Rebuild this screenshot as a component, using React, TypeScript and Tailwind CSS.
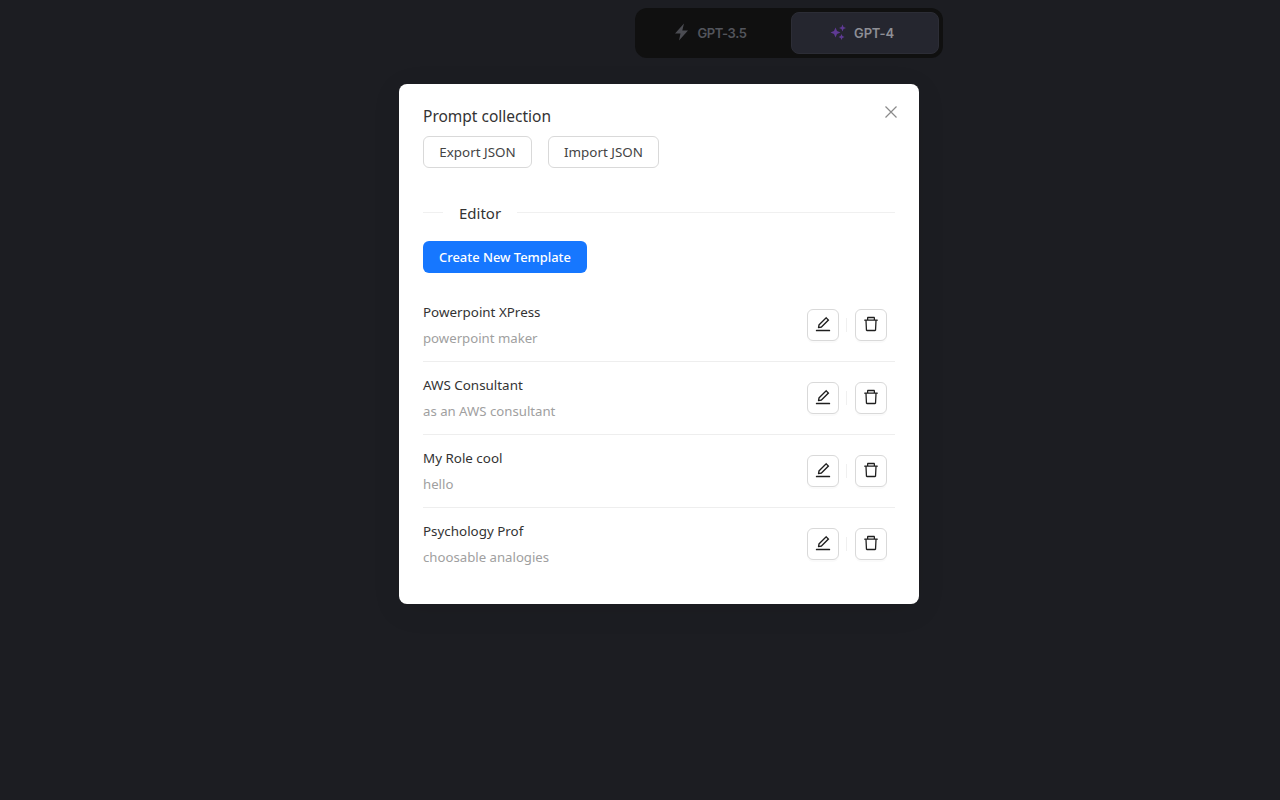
import React from "react";

const items = [
  ["Powerpoint XPress", "powerpoint maker"],
  ["AWS Consultant", "as an AWS consultant"],
  ["My Role cool", "hello"],
  ["Psychology Prof", "choosable analogies"],
];

function EditIcon() {
  return (
    <svg width="16" height="16" viewBox="64 64 896 896" fill="currentColor" className="-translate-y-px">
      <path d="M257.7 752c2 0 4-.2 6-.5L431.9 722c2-.4 3.9-1.3 5.3-2.8l423.9-423.9a9.96 9.96 0 0 0 0-14.1L694.9 114.9c-1.9-1.9-4.4-2.9-7.1-2.9s-5.2 1-7.1 2.9L256.8 538.8c-1.5 1.5-2.4 3.3-2.8 5.3l-29.5 168.2a33.5 33.5 0 0 0 9.4 29.8c6.6 6.4 14.9 9.9 23.8 9.9zm67.4-174.4L687.8 215l73.3 73.3-362.7 362.6-88.9 15.7 15.6-89zM880 836H144c-17.7 0-32 14.3-32 32v36c0 4.4 3.6 8 8 8h784c4.4 0 8-3.6 8-8v-36c0-17.7-14.3-32-32-32z" />
    </svg>
  );
}

function TrashIcon() {
  return (
    <svg width="16" height="16" viewBox="64 64 896 896" fill="currentColor" className="-translate-y-px">
      <path d="M360 184h-8c4.4 0 8-3.6 8-8v8h304v-8c0 4.4 3.6 8 8 8h-8v72h72v-80c0-35.3-28.7-64-64-64H352c-35.3 0-64 28.7-64 64v80h72v-72zm504 72H160c-17.7 0-32 14.3-32 32v32c0 4.4 3.6 8 8 8h60.4l24.7 523c1.6 34.1 29.8 61 63.9 61h454c34.2 0 62.3-26.8 63.9-61l24.7-523H888c4.4 0 8-3.6 8-8v-32c0-17.7-14.3-32-32-32zM731.3 840H292.7l-24.2-512h487l-24.2 512z" />
    </svg>
  );
}

function IconButton({ children }: { children: React.ReactNode }) {
  return (
    <button className="flex h-8 w-8 items-center justify-center rounded-md border border-[#d9d9d9] bg-white text-[rgba(0,0,0,0.88)] shadow-[0_2px_0_rgba(0,0,0,0.02)]">
      {children}
    </button>
  );
}

export default function App() {
  return (
    <div className="relative h-[800px] w-full overflow-hidden bg-[#1c1d22] font-['Noto_Sans','Open_Sans',sans-serif]">
      <div className="flex justify-center pl-[298px] pt-2">
        <div className="flex h-[50px] w-[308px] items-center gap-1 rounded-xl bg-[#101010] p-1 font-['Inter',sans-serif] text-[13px] font-semibold">
          <div className="flex h-[42px] flex-1 items-center justify-center gap-2 pr-1.5 pt-0.5 tracking-[-0.45px] text-[#53555c]">
            <svg width="16" height="18" viewBox="0 0 16 18" fill="#4b4c52" className="-mt-1">
              <path d="M10 .5 1 10.4h5.500L5 17.500l9-10h-5.700z" />
            </svg>
            GPT-3.5
          </div>
          <div className="flex h-[42px] w-[148px] items-center justify-center gap-2 rounded-lg border border-[#2c2d36] bg-[#25262f] pr-1.5 pt-0.5 tracking-[-0.15px] text-[#8e8f96]">
            <svg width="16" height="16" viewBox="0 0 16 16" fill="#5f3a94" className="-mt-1">
              <path d="M5.500 3.500 7 7 10.500 8.500 7 10 5.500 13.500 4 10 .5 8.500 4 7z" />
              <path d="M12.500 .5 13.500 3 16 4 13.500 5 12.500 7.500 11.500 5 9 4 11.500 3z" />
              <path d="M11.500 10 12.400 12.100 14.500 13 12.400 13.900 11.500 16 10.600 13.900 8.500 13 10.600 12.100z" />
            </svg>
            GPT-4
          </div>
        </div>
      </div>

      <div className="absolute left-[399px] top-[84px] h-[520px] w-[520px] rounded-lg bg-white px-6 pt-5 shadow-[0_6px_30px_rgba(0,0,0,0.08)]">
        <button className="absolute right-[20px] top-[20px] text-[#8a8a8a]">
          <svg width="16" height="16" viewBox="0 0 16 16" fill="none" stroke="currentColor" strokeWidth="1.2">
            <path d="M2.500 2.500l11 11M13.500 2.500l-11 11" />
          </svg>
        </button>
        <h2 className="text-[15.5px] font-[450] leading-6 text-[#333]">Prompt collection</h2>
        <div className="mt-2 flex gap-4">
          <button className="h-8 w-[109px] rounded-md border border-[#d9d9d9] pt-px text-[13.4px] text-[#444]">Export JSON</button>
          <button className="h-8 w-[111px] rounded-md border border-[#d9d9d9] pt-px text-[13.4px] text-[#444]">Import JSON</button>
        </div>

        <div className="mt-[33px] flex h-6 items-center">
          <div className="h-px w-5 -translate-y-px bg-[#f0f0f0]" />
          <span className="px-4 text-[15px] leading-6 text-[#333]">Editor</span>
          <div className="h-px flex-1 -translate-y-px bg-[#f0f0f0]" />
        </div>

        <button className="mt-4 h-8 w-[164px] rounded-md bg-[#1677ff] pt-px text-[12.9px] font-medium text-white">Create New Template</button>

        <div className="mt-4">
          {items.map(([title, desc], i) => (
            <div key={title} className={`flex h-[73px] items-center justify-between border-b pr-2 ${i < 3 ? "border-[#eeeeee]" : "border-transparent"}`}>
              <div>
                <div className="text-[13.4px] font-[450] leading-[22px] text-[#333]">{title}</div>
                <div className="mt-1 text-[13.2px] leading-[22px] text-[#a0a0a0]">{desc}</div>
              </div>
              <div className="flex items-center">
                <IconButton><EditIcon /></IconButton>
                <div className="ml-[7px] mr-2 h-3.5 w-px bg-[#f0f0f0]" />
                <IconButton><TrashIcon /></IconButton>
              </div>
            </div>
          ))}
        </div>
      </div>
    </div>
  );
}
